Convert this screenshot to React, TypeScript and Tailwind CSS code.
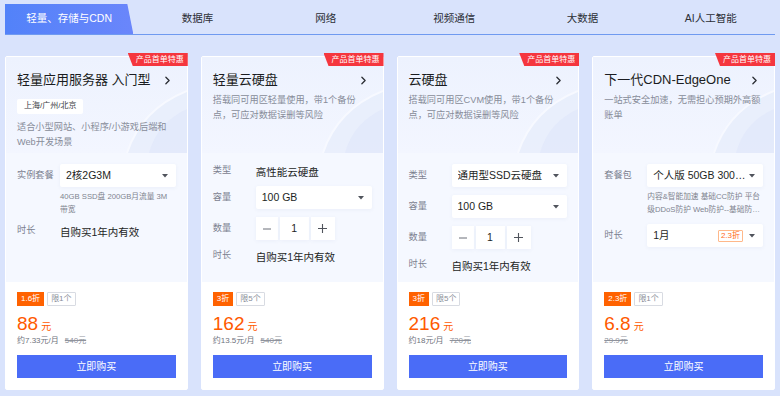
import { ChevronRight } from 'lucide-react';
import type { ReactNode } from 'react';

const tabs = ['轻量、存储与CDN', '数据库', '网络', '视频通信', '大数据', 'AI人工智能'];

function Caret() {
  return (
    <svg width="6" height="4" viewBox="0 0 6 4" className="shrink-0">
      <path d="M0 0h6L3 3.5z" fill="#50545c" />
    </svg>
  );
}

function Select({ children, extra }: { children: ReactNode; extra?: ReactNode }) {
  return (
    <div className="flex h-[23px] w-full items-center gap-[3px] rounded-[2px] bg-white pl-[6px] pr-[8px] text-[10.5px] text-[#1d1f24] shadow-[0_1px_4px_rgba(60,90,160,0.06)]">
      <span className="min-w-0 flex-1 truncate">{children}</span>
      {extra}
      <Caret />
    </div>
  );
}

function Stepper() {
  return (
    <div className="flex h-[23px] gap-[2px] text-[10.5px] text-[#1d1f24]">
      <div className="flex w-[22px] items-center justify-center bg-white shadow-[0_1px_4px_rgba(60,90,160,0.06)]">
        <svg width="8" height="2" viewBox="0 0 8 2"><path d="M0 1h8" stroke="#6b6f78" strokeWidth="1" /></svg>
      </div>
      <div className="flex w-[29px] items-center justify-center bg-white shadow-[0_1px_4px_rgba(60,90,160,0.06)]">1</div>
      <div className="flex w-[24px] items-center justify-center bg-white shadow-[0_1px_4px_rgba(60,90,160,0.06)]">
        <svg width="9" height="9" viewBox="0 0 9 9"><path d="M0 4.5h9M4.5 0v9" stroke="#50545c" strokeWidth="1.1" /></svg>
      </div>
    </div>
  );
}

function Row({ label, children, className = '' }: { label: string; children: ReactNode; className?: string }) {
  return (
    <div className={`flex items-center ${className}`}>
      <span className="w-[43px] shrink-0 text-[9.2px] text-[#7c8190]">{label}</span>
      <div className="min-w-0 flex-1">{children}</div>
    </div>
  );
}

function Note({ lines }: { lines: string[] }) {
  return (
    <div className="ml-[43px] mt-[3px] text-[7.7px] leading-[13px] text-[#80848f]">
      {lines.map((l, i) => (
        <div key={l} className={i === lines.length - 1 ? 'truncate' : 'whitespace-nowrap'}>{l}</div>
      ))}
    </div>
  );
}

function Decoration() {
  return (
    <svg className="pointer-events-none absolute bottom-0 right-0" width="90" height="70" viewBox="0 0 90 70">
      <path d="M30 70 C40 40 60 20 90 8 L90 70 Z" fill="#e6ecfb" opacity="0.7" />
      <path d="M52 70 C58 48 72 34 90 26 L90 70 Z" fill="#dfe6fa" opacity="0.6" />
      <path d="M30 70 C40 40 60 20 90 8" stroke="#f7f9ff" strokeWidth="2" fill="none" />
    </svg>
  );
}

type Card = {
  title: string;
  region?: string;
  desc: string[];
  form: ReactNode;
  formPad: string;
  off: string;
  limit: string;
  price: string;
  per?: string;
  orig: string;
};

const cards: Card[] = [
  {
    title: '轻量应用服务器 入门型',
    region: '上海/广州/北京',
    desc: ['适合小型网站、小程序/小游戏后端和', 'Web开发场景'],
    formPad: 'pt-[11px]',
    form: (
      <>
        <Row label="实例套餐">
          <Select>2核2G3M</Select>
        </Row>
        <Note lines={['40GB SSD盘 200GB月流量 3M', '带宽']} />
        <Row label="时长" className="mt-[6px] h-[18px]">
          <span className="text-[10.5px] text-[#1d1f24]">自购买1年内有效</span>
        </Row>
      </>
    ),
    off: '1.6折',
    limit: '限1个',
    price: '88',
    per: '约7.33元/月',
    orig: '540元',
  },
  {
    title: '轻量云硬盘',
    desc: ['搭载同可用区轻量使用，带1个备份', '点，可应对数据误删等风险'],
    formPad: 'pt-[9px]',
    form: (
      <>
        <Row label="类型" className="h-[18px]">
          <span className="text-[10.5px] text-[#1d1f24]">高性能云硬盘</span>
        </Row>
        <Row label="容量" className="mt-[6px]">
          <Select>100 GB</Select>
        </Row>
        <Row label="数量" className="mt-[8px]">
          <Stepper />
        </Row>
        <Row label="时长" className="mt-[7px] h-[18px]">
          <span className="text-[10.5px] text-[#1d1f24]">自购买1年内有效</span>
        </Row>
      </>
    ),
    off: '3折',
    limit: '限5个',
    price: '162',
    per: '约13.5元/月',
    orig: '540元',
  },
  {
    title: '云硬盘',
    desc: ['搭载同可用区CVM使用，带1个备份', '点，可应对数据误删等风险'],
    formPad: 'pt-[11px]',
    form: (
      <>
        <Row label="类型">
          <Select>通用型SSD云硬盘</Select>
        </Row>
        <Row label="容量" className="mt-[8px]">
          <Select>100 GB</Select>
        </Row>
        <Row label="数量" className="mt-[8px]">
          <Stepper />
        </Row>
        <Row label="时长" className="mt-[7px] h-[18px]">
          <span className="text-[10.5px] text-[#1d1f24]">自购买1年内有效</span>
        </Row>
      </>
    ),
    off: '3折',
    limit: '限5个',
    price: '216',
    per: '约18元/月',
    orig: '720元',
  },
  {
    title: '下一代CDN-EdgeOne',
    desc: ['一站式安全加速，无需担心预期外高额', '账单'],
    formPad: 'pt-[11px]',
    form: (
      <>
        <Row label="套餐包">
          <Select>个人版 50GB 300GB 流量包</Select>
        </Row>
        <Note lines={['内容&智能加速 基础CC防护 平台', '级DDoS防护 Web防护--基础防护 Bot管理']} />
        <Row label="时长" className="mt-[8px]">
          <Select
            extra={
              <span className="mr-[3px] flex h-[12px] items-center rounded-[1px] border border-[#ffb88a] px-[2px] text-[8px] text-[#ff6a1a]">
                2.3折
              </span>
            }
          >
            1月
          </Select>
        </Row>
      </>
    ),
    off: '2.3折',
    limit: '限1个',
    price: '6.8',
    orig: '29.9元',
  },
];

function ProductCard({ c }: { c: Card }) {
  return (
    <div className="relative flex h-[334px] flex-col rounded-[2px] border border-white bg-white">
      <div className="absolute right-[-1px] top-[-4px] z-10 flex h-[13px] w-[60px] items-center justify-center bg-[#f5363e] pl-[4px] text-[8px] text-white [clip-path:polygon(0_0,100%_0,100%_100%,5px_100%)]">
        产品首单特惠
      </div>
      <div className="relative h-[96px] overflow-hidden bg-gradient-to-b from-[#edf2fe] to-[#f3f6ff] px-[11px] pt-[12px]">
        <Decoration />
        <div className="relative flex h-[22px] items-center justify-between">
          <span className="text-[13px] text-[#1a1c21]">{c.title}</span>
          <ChevronRight size={13} strokeWidth={2.4} className="mr-[2px] text-[#2a2d33]" />
        </div>
        {c.region && (
          <div className="relative mt-[2px] inline-flex h-[15px] items-center rounded-[2px] bg-white px-[7px] text-[8px] text-[#3a3d44]">
            {c.region}
          </div>
        )}
        <div className={`relative whitespace-nowrap text-[9.2px] leading-[15px] text-[#878c99] ${c.region ? 'mt-[5px]' : 'mt-[2px]'}`}>
          {c.desc.map(d => (
            <div key={d}>{d}</div>
          ))}
        </div>
      </div>
      <div className={`h-[129px] bg-[#f5f8ff] px-[11px] ${c.formPad}`}>{c.form}</div>
      <div className="flex-1 bg-white px-[11px] pt-[10px]">
        <div className="flex h-[14px] gap-[3px] text-[8px]">
          <span className="flex items-center bg-[#ff6200] px-[4px] text-white">{c.off}</span>
          <span className="flex items-center rounded-[1px] border border-[#d8dbe2] px-[3px] text-[#8a8e98]">{c.limit}</span>
        </div>
        <div className="mt-[7px] flex h-[22px] items-end gap-[3px] text-[#ff5a00]">
          <span className="text-[19px] leading-[22px]">{c.price}</span>
          <span className="pb-[2px] text-[10px] leading-[12px]">元</span>
        </div>
        <div className="flex h-[12px] items-center gap-[6px] text-[8px] text-[#6e727c]">
          {c.per && <span>{c.per}</span>}
          <span className="text-[#8f939c] line-through">{c.orig}</span>
        </div>
        <button className="mt-[8px] flex h-[23px] w-full items-center justify-center bg-[#4a6cf7] text-[10px] text-white">
          立即购买
        </button>
      </div>
    </div>
  );
}

export default function App() {
  return (
    <div className="h-[396px] w-[780px] overflow-hidden bg-[#d9e3fc] font-['Liberation_Sans','Noto_Sans_CJK_SC',sans-serif]">
      <div className="mx-[5px] flex h-[35px] items-end border-b border-[#6f9af0] pt-[4px]">
        {tabs.map((t, i) => (
          <div
            key={t}
            className={`flex h-full flex-1 items-center justify-center text-[10.5px] ${
              i === 0
                ? 'bg-gradient-to-r from-[#5282f9] to-[#6a86fb] text-white [clip-path:polygon(0_0,calc(100%-6px)_0,100%_100%,0_100%)]'
                : 'text-[#2c2f36]'
            }`}
          >
            {t}
          </div>
        ))}
      </div>
      <div className="mt-[21px] grid grid-cols-4 gap-[13px] px-[5px]">
        {cards.map(c => (
          <ProductCard key={c.title} c={c} />
        ))}
      </div>
    </div>
  );
}
